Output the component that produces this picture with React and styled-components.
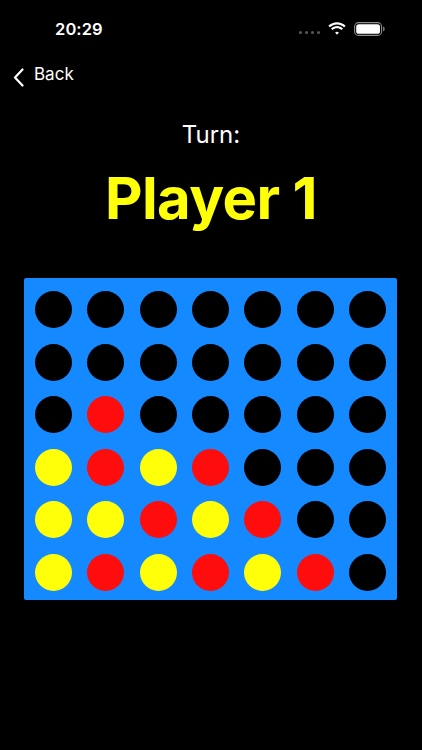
import React from "react";
import styled, { createGlobalStyle } from "styled-components";

const Global = createGlobalStyle`
  html, body { margin: 0; padding: 0; background: #000; }
  body { font-family: Inter, "Noto Sans", "Liberation Sans", sans-serif; -webkit-font-smoothing: antialiased; }
`;

const Page = styled.div`
  width: 422px;
  height: 750px;
  background: #000;
  color: #fff;
  display: flex;
  flex-direction: column;
  overflow: hidden;
`;

const StatusBar = styled.div`
  height: 47px;
  box-sizing: border-box;
  padding: 19px 37px 0 55px;
  display: flex;
  align-items: flex-start;
  justify-content: space-between;
`;

const Time = styled.div`
  font-size: 16.5px;
  line-height: 20px;
  font-weight: 600;
  letter-spacing: 0.1px;
`;

const StatusIcons = styled.div`
  display: flex;
  align-items: center;
  height: 20px;
  gap: 7px;
`;

const Dots = styled.div`
  display: flex;
  gap: 2.5px;
  margin-top: 7px;
  span {
    width: 3.5px;
    height: 3.5px;
    border-radius: 50%;
    background: #5a5a5e;
  }
`;

const NavBar = styled.div`
  margin-top: 16px;
  padding-left: 13px;
  display: flex;
  align-items: center;
  height: 22px;
  gap: 10px;
`;

const BackLabel = styled.span`
  font-size: 17px;
  line-height: 22px;
  color: #fff;
`;

const Chevron = styled.svg`
  margin-top: 6px;
  flex: none;
`;

const TurnLabel = styled.div`
  margin-top: 36px;
  text-align: center;
  font-size: 24px;
  line-height: 28px;
  font-weight: 400;
`;

const PlayerName = styled.div`
  margin-top: 14px;
  text-align: center;
  font-size: 58px;
  line-height: 70px;
  font-weight: 700;
  color: #ffff0a;
  letter-spacing: -0.6px;
`;

const Board = styled.div`
  margin: 45px 0 0 24px;
  width: 373px;
  height: 322px;
  box-sizing: border-box;
  padding: 13px 11px 9px 11px;
  background: #1589ff;
  border-radius: 2px;
  display: grid;
  grid-template-columns: repeat(7, 37px);
  grid-template-rows: repeat(6, 37px);
  justify-content: space-between;
  align-content: space-between;
`;

const colors = { B: "#000", R: "#ff0d0d", Y: "#ffff0a" };

const Disc = styled.div`
  width: 37px;
  height: 37px;
  border-radius: 50%;
  background: ${(p) => colors[p.$c]};
`;

const rows = [
  "BBBBBBB",
  "BBBBBBB",
  "BRBBBBB",
  "YRYRBBB",
  "YYRYRBB",
  "YRYRYRB",
];

export default function App() {
  return (
    <Page>
      <Global />
      <StatusBar>
        <Time>20:29</Time>
        <StatusIcons>
          <Dots>
            <span />
            <span />
            <span />
            <span />
          </Dots>
          <svg width="20" height="14" viewBox="0 0 19 13">
            <path d="M9.5 2.2c2.6 0 5 1 6.8 2.7l1.4-1.5C15.5 1.3 12.6 0 9.5 0S3.5 1.3 1.3 3.4l1.4 1.5C4.5 3.2 6.9 2.2 9.5 2.2z" fill="#fff" />
            <path d="M9.5 5.8c1.6 0 3.1.6 4.3 1.7l1.4-1.5C13.7 4.6 11.7 3.7 9.5 3.7S5.3 4.6 3.8 6l1.4 1.5c1.2-1.1 2.7-1.7 4.3-1.7z" fill="#fff" />
            <path d="M9.5 9.2c.7 0 1.3.3 1.8.7L9.5 12 7.7 9.9c.5-.4 1.1-.7 1.8-.7z" fill="#fff" />
          </svg>
          <svg width="31" height="14" viewBox="0 0 31 14">
            <rect x="0.6" y="0.6" width="27" height="12.8" rx="4" fill="none" stroke="#8e8e93" strokeWidth="1.1" />
            <rect x="2.2" y="2.2" width="23.8" height="9.6" rx="2.6" fill="#fff" />
            <path d="M29.2 4.6c.9.3 1.4 1.2 1.4 2.4s-.5 2.1-1.4 2.4z" fill="#8e8e93" />
          </svg>
        </StatusIcons>
      </StatusBar>
      <NavBar>
        <Chevron width="11" height="19" viewBox="0 0 11 19">
          <path d="M9.5 1.5L2 9.5l7.5 8" fill="none" stroke="#fff" strokeWidth="2.2" strokeLinecap="round" strokeLinejoin="round" />
        </Chevron>
        <BackLabel>Back</BackLabel>
      </NavBar>
      <TurnLabel>Turn:</TurnLabel>
      <PlayerName>Player 1</PlayerName>
      <Board>
        {rows.map((r, i) =>
          r.split("").map((c, j) => <Disc key={`${i}-${j}`} $c={c} />)
        )}
      </Board>
    </Page>
  );
}
